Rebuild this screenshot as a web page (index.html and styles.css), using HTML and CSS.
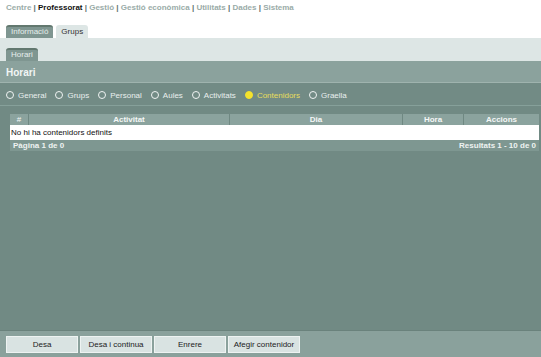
FILE: index.html
```html
<!DOCTYPE html>
<html>
<head>
  <title>Horari</title>
  <link rel="stylesheet" href="styles.css">
</head>
<body>

<div class="top-menu">
  <a class="menu-item">Centre</a> |
  <a class="menu-item current">Professorat</a> |
  <a class="menu-item">Gestió</a> |
  <a class="menu-item">Gestió econòmica</a> |
  <a class="menu-item">Utilitats</a> |
  <a class="menu-item">Dades</a> |
  <a class="menu-item">Sistema</a>
</div>

<div class="tabs">
  <div class="tab active">Informació</div>
  <div class="tab">Grups</div>
</div>

<div class="subtabs">
  <div class="tab active">Horari</div>
</div>

<div class="title">Horari</div>

<div class="radios">
  <label class="radio"><span class="dot"></span>General</label>
  <label class="radio"><span class="dot"></span>Grups</label>
  <label class="radio"><span class="dot"></span>Personal</label>
  <label class="radio"><span class="dot"></span>Aules</label>
  <label class="radio"><span class="dot"></span>Activitats</label>
  <label class="radio selected"><span class="dot"></span>Contenidors</label>
  <label class="radio"><span class="dot"></span>Graella</label>
</div>

<div class="main">
  <table class="grid">
    <tr class="head">
      <th class="c-num">#</th>
      <th class="c-act">Activitat</th>
      <th class="c-dia">Dia</th>
      <th class="c-hora">Hora</th>
      <th class="c-acc">Accions</th>
    </tr>
    <tr class="empty">
      <td colspan="5">No hi ha contenidors definits</td>
    </tr>
    <tr class="foot">
      <td colspan="2">Pàgina 1 de 0</td>
      <td colspan="3" class="right">Resultats 1 - 10 de 0</td>
    </tr>
  </table>
</div>

<div class="buttons">
  <button class="btn">Desa</button>
  <button class="btn">Desa i continua</button>
  <button class="btn">Enrere</button>
  <button class="btn">Afegir contenidor</button>
</div>

</body>
</html>
```

FILE: styles.css
```css
html, body {
  height: 100%;
}
body {
  margin: 0;
  display: flex;
  flex-direction: column;
  background-color: #ffffff;
  font-family: "Liberation Sans", Arial, sans-serif;
  font-size: 8px;
}
.top-menu {
  padding: 3px 6px 0 6px;
  height: 22px;
  box-sizing: border-box;
  font-weight: bold;
  font-size: 8px;
  color: #5f7470;
}
.menu-item {
  color: #9aaca8;
}
.menu-item.current {
  color: #111111;
}
.tabs {
  display: flex;
  gap: 3px;
  padding: 3px 6px 0 6px;
  height: 16px;
  box-sizing: border-box;
}
.tab {
  padding: 2px 5px 0 5px;
  border-radius: 3px 3px 0 0;
  background-color: #dde6e5;
  color: #333333;
  font-size: 8px;
}
.tab.active {
  background-color: #7f9691;
  color: #e6eeec;
  border-top: 2px solid #62786f;
  padding-top: 0;
}
.subtabs {
  display: flex;
  align-items: flex-end;
  background-color: #dde6e5;
  height: 23px;
  padding: 0 6px;
  box-sizing: border-box;
}
.subtabs .tab {
  height: 13px;
  box-sizing: border-box;
}
.title {
  background-color: #8ba29d;
  color: #f2f6f5;
  font-weight: bold;
  font-size: 10px;
  height: 22px;
  line-height: 23px;
  padding: 0 6px;
  box-sizing: border-box;
  border-bottom: 1px solid #9fb3ae;
}
.radios {
  display: flex;
  gap: 9px;
  align-items: center;
  background-color: #728b85;
  height: 23px;
  padding: 2px 6px 0 6px;
  box-sizing: border-box;
  border-bottom: 1px solid #86a09a;
  color: #e9efee;
}
.radio {
  display: flex;
  align-items: center;
  gap: 4px;
}
.dot {
  width: 6px;
  height: 6px;
  border: 1px solid #f0f4f3;
  border-radius: 50%;
}
.radio.selected {
  color: #e8de5c;
}
.radio.selected .dot {
  background-color: #f4e22c;
  border-color: #f4e22c;
}
.main {
  flex: 1;
  background-color: #718a84;
  padding: 8px 2px 0 10px;
}
.grid {
  width: 100%;
  border-collapse: collapse;
  font-size: 8px;
}
.grid th {
  background-color: #8ba39e;
  color: #f4f7f6;
  font-weight: bold;
  height: 11px;
  padding: 0;
  border-left: 1px solid #6f8882;
}
.grid th:first-child {
  border-left: none;
  font-weight: normal;
}
.c-num { width: 18px; }
.c-act { width: 200px; }
.c-dia { width: 172px; }
.c-hora { width: 60px; }
.empty td {
  background-color: #ffffff;
  color: #111111;
  height: 15px;
  padding: 0 1px;
}
.foot td {
  background-color: #7e9791;
  color: #eef3f2;
  font-weight: bold;
  height: 11px;
  padding: 0 3px;
}
.foot .right {
  text-align: right;
}
.buttons {
  display: flex;
  gap: 2px;
  background-color: #8aa19c;
  border-top: 1px solid #6a827c;
  height: 27px;
  padding: 5px 6px 0 6px;
  box-sizing: border-box;
}
.btn {
  width: 72px;
  height: 17px;
  padding: 0;
  background-color: #d9e3e2;
  border: 1px solid #eef3f2;
  font-family: "Liberation Sans", Arial, sans-serif;
  font-size: 8px;
  color: #222222;
}
```
